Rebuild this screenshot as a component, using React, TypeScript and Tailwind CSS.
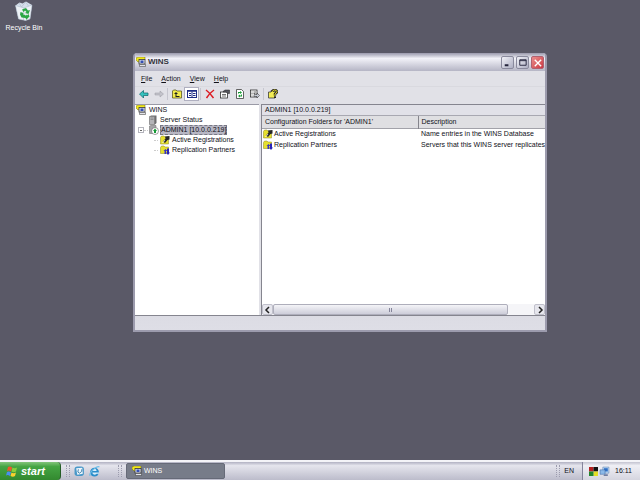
import type { ReactNode } from "react";
import clsx from "clsx";

function WinsIcon() {
  return (
    <svg viewBox="0 0 20 20" className="h-[10px] w-[10px] shrink-0" aria-hidden="true">
      <path d="M0 2L4 0h14v5H8v5H4L0 6z" fill="#f2e91c" stroke="#6b6614" />
      <rect x="6" y="5" width="12" height="9" fill="#dfe2ec" stroke="#333" strokeWidth="1.5" />
      <rect x="9" y="7" width="6" height="5" fill="#3550b4" />
      <path d="M7 15h12v4H7z" fill="#e3e4ea" stroke="#333" />
    </svg>
  );
}

function ServerIcon() {
  return (
    <svg viewBox="0 0 20 20" className="h-[10px] w-[10px] shrink-0" aria-hidden="true">
      <path d="M3 3l3-2h11v15l-3 3H3z" fill="#6d6d70" />
      <path d="M3 3h10v16H3z" fill="#b4b4b8" stroke="#777" />
      <path d="M5 6h6M5 9h6" stroke="#666" />
    </svg>
  );
}

function ServerUpIcon() {
  return (
    <svg viewBox="0 0 20 20" className="h-[10px] w-[10px] shrink-0" aria-hidden="true">
      <path d="M1 2l3-1h10v16H1z" fill="#a5a5aa" stroke="#666" />
      <circle cx="12" cy="12" r="7" fill="#fff" stroke="#444" />
      <path d="M12 7l4 5h-2v4h-4v-4H8z" fill="#159a35" />
    </svg>
  );
}

function RegistrationsIcon() {
  return (
    <svg viewBox="0 0 20 20" className="h-[10px] w-[10px] shrink-0" aria-hidden="true">
      <path d="M1 5l2-3h5l2 2h7v14H1z" fill="#e6e02e" stroke="#8a8520" />
      <path d="M10 3l9-1v7l-4 1-5 6-4-3 5-6z" fill="#262626" />
      <path d="M5 16l5-6" stroke="#fff" strokeWidth="1.5" />
    </svg>
  );
}

function PartnersIcon() {
  return (
    <svg viewBox="0 0 20 20" className="h-[10px] w-[10px] shrink-0" aria-hidden="true">
      <path d="M1 5l2-3h5l2 2h7v13H1z" fill="#e6e02e" stroke="#8a8520" />
      <path d="M11 8l4 4h-3v6H9v-6H7z" fill="#3a36c0" />
      <path d="M16 20l-4-5h2V7h4v8h2z" fill="#2824b8" />
    </svg>
  );
}

function RecycleIcon() {
  return (
    <svg viewBox="0 0 40 40" className="h-[20px] w-[20px]" aria-hidden="true">
      <path d="M3 9l8-6 6 2 7-4 12 7-4 28-9 3-14-3z" fill="#d5dfeb" />
      <path d="M3 9l17 5 16-6-4 28-9 3-14-3z" fill="#edf2f6" stroke="#a5b2c3" />
      <path d="M20 14l-1 24M10 4l5 8 8-10 6 8" stroke="#b5c1d0" strokeWidth="1.5" fill="none" />
      <path d="M16 17l8-3 4 5 4-1-3 8-7-2 3-2-3-3-3 3zM13 22l6 2-1 3 5 1v6l-8-1-3-6zM29 26l2 5-5 5v2l-5-6 5-5v2z" fill="#2ba845" />
    </svg>
  );
}

function Flag() {
  return (
    <svg viewBox="0 0 24 22" className="h-[11px] w-[12px] shrink-0" aria-hidden="true">
      <path d="M4 2q4-2 8 1l-2 8q-4-3-8-1z" fill="#f0562b" />
      <path d="M13 3q4 3 9 0l-2 8q-4 3-9 0z" fill="#88cf3c" />
      <path d="M2 12q4-2 8 1l-2 7q-4-3-8-1z" fill="#4a8ef0" />
      <path d="M11 13q4 3 9 0l-2 7q-4 3-9 0z" fill="#fbd02f" />
    </svg>
  );
}

const toolbar: { label: string; art?: ReactNode; active?: boolean }[] = [
  {
    label: "Back",
    art: <path d="M1 10l8-7v5h9v5H9v5z" fill="#35c4c0" stroke="#116b70" strokeWidth="1.5" />,
  },
  {
    label: "Forward",
    art: <path d="M19 10l-7-6v4H2v4h10v4z" fill="#c3c3cb" stroke="#9a9aa3" />,
  },
  { label: "sep" },
  {
    label: "Up one level",
    art: (
      <>
        <path d="M1 4l2-2h5l2 2h9v14H1z" fill="#f3ed4c" stroke="#55521a" strokeWidth="1.5" />
        <path d="M8 6l4 4H9v4h6v2H7v-6H4z" fill="#1c1c1c" />
      </>
    ),
  },
  {
    label: "Show/Hide Console Tree",
    active: true,
    art: (
      <>
        <rect x="1" y="3" width="18" height="14" fill="#fff" stroke="#1d2c86" strokeWidth="2" />
        <path d="M1 4h18" stroke="#1d2c86" strokeWidth="3" />
        <path d="M10 5v12M4 9h4M4 13h4M12 9h5M12 13h5" stroke="#1d2c86" strokeWidth="2" />
      </>
    ),
  },
  { label: "sep" },
  {
    label: "Delete",
    art: <path d="M2 2q8 6 15 16M18 2Q9 8 3 18" stroke="#dc1c24" strokeWidth="3" fill="none" />,
  },
  {
    label: "Properties",
    art: (
      <>
        <rect x="1" y="6" width="14" height="12" fill="#fff" stroke="#222" strokeWidth="1.5" />
        <path d="M4 11h8M4 14h8" stroke="#444" strokeWidth="1.5" />
        <path d="M6 5l4-3h9v7h-3l-4-3H6z" fill="#56565e" stroke="#222" />
      </>
    ),
  },
  {
    label: "Refresh",
    art: (
      <>
        <path d="M3 1h10l4 4v14H3z" fill="#fff" stroke="#333" strokeWidth="1.5" />
        <path d="M6 9V6h4V4l4 3-4 3V8H8v1zM14 11v4h-4v2l-4-3 4-3v2h2v-2z" fill="#179a35" />
      </>
    ),
  },
  {
    label: "Export List",
    art: (
      <>
        <rect x="1" y="2" width="13" height="14" fill="#fff" stroke="#222" strokeWidth="1.5" />
        <path d="M3 6h2M7 6h5M3 9h2M7 9h4M3 12h2" stroke="#333" strokeWidth="1.5" />
        <path d="M8 11h6V8l5 5-5 5v-3H8z" fill="#c8ccd6" stroke="#222" />
      </>
    ),
  },
  { label: "sep" },
  {
    label: "Help",
    art: (
      <>
        <path d="M1 6h5V3h8v15H1z" fill="#f2ec55" stroke="#333" strokeWidth="1.5" />
        <path d="M9 6q0-4 4-4t5 3q0 3-4 5v3" fill="none" stroke="#222" strokeWidth="5" />
        <path d="M9 6q0-4 4-4t5 3q0 3-4 5v3" fill="none" stroke="#f0e325" strokeWidth="2" />
        <path d="M12 15h4v3h-4z" fill="#222" />
      </>
    ),
  },
];

const rows = [
  { name: "Active Registrations", description: "Name entries in the WINS Database", icon: <RegistrationsIcon /> },
  { name: "Replication Partners", description: "Servers that this WINS server replicates", icon: <PartnersIcon /> },
];

function TitleBar() {
  const button = "grid h-[13px] w-[13px] place-items-center rounded-xs border";
  return (
    <header className="flex h-[18px] shrink-0 items-center bg-linear-to-b from-[#9a99ac] via-[#f3f3f9] via-30% to-[#b5b5c5] pr-px pl-px">
      <WinsIcon />
      <h1 className="ml-[2px] flex-1 text-[8px] font-bold text-[#33333d]">WINS</h1>
      <div className="flex gap-[2px]">
        <button aria-label="Minimize" className={clsx(button, "border-[#8a8a9d] bg-linear-to-br from-[#f2f2f8] to-[#adaec2]")}>
          <svg viewBox="0 0 12 12" className="size-[11px]">
            <path d="M3 9h4" stroke="#24243c" strokeWidth="2" />
          </svg>
        </button>
        <button aria-label="Maximize" className={clsx(button, "border-[#8a8a9d] bg-linear-to-br from-[#f2f2f8] to-[#adaec2]")}>
          <svg viewBox="0 0 12 12" className="size-[11px]">
            <path d="M3 3h7v6H3zM3 4h7" fill="none" stroke="#24243c" />
          </svg>
        </button>
        <button aria-label="Close" className={clsx(button, "border-[#b06070] bg-linear-to-br from-[#ea8c8c] to-[#c93442]")}>
          <svg viewBox="0 0 12 12" className="size-[11px]">
            <path d="M3 3l7 7M10 3l-7 7" stroke="#fff" strokeWidth="1.5" />
          </svg>
        </button>
      </div>
    </header>
  );
}

function Toolbar() {
  return (
    <div role="toolbar" className="flex h-[18px] shrink-0 items-center border-t border-[#d9d9df] pb-[3px] pl-px">
      {toolbar.map((item, i) =>
        item.art ? (
          <button
            key={i}
            aria-label={item.label}
            className={clsx("grid h-[14px] w-[15px] place-items-center border", item.active ? "border-[#b0b0c0] bg-white" : "border-transparent")}
          >
            <svg viewBox="0 0 20 20" className="size-[10px]">
              {item.art}
            </svg>
          </button>
        ) : (
          <span key={i} className="mx-px h-[12px] w-px bg-[#c6c6cf]" />
        )
      )}
    </div>
  );
}

function Tree() {
  const row = "flex h-[10px] items-center";
  return (
    <nav className="w-[124px] shrink-0 overflow-hidden border-t border-[#9a9aa6] bg-white">
      <ul>
        <li className={clsx(row, "gap-[3px] pl-px")}>
          <WinsIcon />
          WINS
        </li>
        <li className={clsx(row, "gap-[2px] pl-[13px]")}>
          <ServerIcon />
          Server Status
        </li>
        <li className={clsx(row, "pl-[3px]")}>
          <button aria-label="Collapse" className="grid size-[6px] place-items-center border border-[#b4b4bc]">
            <span className="h-px w-[2px] bg-[#666]" />
          </button>
          <span className="mr-px w-[4px] border-t border-dotted border-[#ccc]" />
          <ServerUpIcon />
          <span className="ml-px h-[10px] border border-dashed border-[#777784] bg-[#b7b6c3] leading-[8px]">ADMIN1 [10.0.0.219]</span>
        </li>
        <li className={clsx(row, "gap-[2px] pl-[19px]")}>
          <span className="w-[4px] border-t border-dotted border-[#ccc]" />
          <RegistrationsIcon />
          Active Registrations
        </li>
        <li className={clsx(row, "gap-[2px] pl-[19px]")}>
          <span className="w-[4px] border-t border-dotted border-[#ccc]" />
          <PartnersIcon />
          Replication Partners
        </li>
      </ul>
    </nav>
  );
}

function ScrollBar() {
  const arrow = "grid w-[11px] place-items-center rounded-xs border border-[#c0c0cb] bg-[#e6e6ed]";
  return (
    <div className="flex h-[11px] shrink-0 bg-[#f5f5f8]">
      <button aria-label="Scroll left" className={arrow}>
        <svg viewBox="0 0 8 8" className="size-[8px]">
          <path d="M5 1L2 4l3 3" fill="none" stroke="#222" strokeWidth="1.5" />
        </svg>
      </button>
      <div className="flex flex-1">
        <div className="grid w-[90%] place-items-center rounded-xs border border-[#aeaebb] bg-linear-to-b from-[#f4f4f8] to-[#cdcdd9]">
          <span className="h-[4px] w-[3px] border-x border-[#85859a]" />
        </div>
      </div>
      <button aria-label="Scroll right" className={arrow}>
        <svg viewBox="0 0 8 8" className="size-[8px]">
          <path d="M3 1l3 3-3 3" fill="none" stroke="#222" strokeWidth="1.5" />
        </svg>
      </button>
    </div>
  );
}

function Details() {
  return (
    <section className="flex min-w-0 flex-1 flex-col overflow-hidden border-t border-l border-[#85858f] bg-white">
      <h2 className="h-[11px] shrink-0 border-b border-[#a8a8b1] bg-[#e1e1e8] pl-[3px] leading-[10px]">ADMIN1 [10.0.0.219]</h2>
      <div className="min-h-0 flex-1 overflow-hidden">
        <table className="w-full table-fixed border-collapse text-left whitespace-nowrap">
          <thead>
            <tr className="h-[12px] border-b border-[#a2a2a9] bg-[#dfdfe2]">
              <th className="w-[156px] border-r border-[#85858c] p-0 pl-[3px] font-normal">Configuration Folders for 'ADMIN1'</th>
              <th className="p-0 pl-[3px] font-normal">Description</th>
            </tr>
          </thead>
          <tbody>
            {rows.map((row) => (
              <tr key={row.name} className="h-[11px]">
                <td className="p-0 pl-px">
                  <span className="flex items-center gap-px">
                    {row.icon}
                    {row.name}
                  </span>
                </td>
                <td className="p-0 pl-[3px]">{row.description}</td>
              </tr>
            ))}
          </tbody>
        </table>
      </div>
      <ScrollBar />
    </section>
  );
}

function Grip() {
  return <span className="h-[12px] w-[4px] border-x border-dotted border-[#9c9cae]" />;
}

function Taskbar() {
  return (
    <footer className="flex h-[20px] items-stretch border-t-2 border-[#f4f4f8] bg-linear-to-b from-[#b1b1c2] via-[#e5e5ed] via-20% to-[#bcbccb]">
      <button className="flex w-[61px] items-center gap-[3px] rounded-r-sm border-r border-[#245c25] bg-linear-to-b from-[#82c47b] via-[#45a544] via-25% to-[#33892f] pl-[6px] text-[11px] font-bold text-white italic">
        <Flag />
        start
      </button>
      <div className="flex flex-1 items-center pl-[5px]">
        <Grip />
        <button aria-label="Show Desktop" className="ml-[4px]">
          <svg viewBox="0 0 20 20" className="size-[11px]">
            <rect x="1" y="1" width="17" height="17" rx="5" fill="#4a98c8" />
            <path d="M4 4l11-1 1 11-10 2z" fill="#edf5fb" />
            <path d="M8 6l-1 5 3 2 4-3V6" stroke="#2871a0" strokeWidth="1.5" fill="none" />
          </svg>
        </button>
        <button aria-label="Internet Explorer" className="ml-[4px]">
          <svg viewBox="0 0 20 20" className="size-[11px]">
            <circle cx="10" cy="11" r="8" fill="#2b8dca" />
            <path d="M6 9q1-4 4-4t4 4zM6 12h12v2h-4q-2 2-4 2-4-1-4-4z" fill="#d9eefa" />
            <path d="M2 18Q0 13 8 6t11-4" fill="none" stroke="#6cbce6" strokeWidth="2" />
          </svg>
        </button>
        <span className="w-[18px]" />
        <Grip />
        <button className="ml-[4px] flex h-[16px] w-[99px] items-center gap-[2px] rounded-xs border border-[#666a78] bg-[#777c89] pl-[5px] text-white">
          <WinsIcon />
          WINS
        </button>
      </div>
      <div className="flex items-center">
        <Grip />
        <button className="mr-[8px] ml-[4px]">EN</button>
      </div>
      <div className="flex w-[58px] items-center gap-px border-l border-[#85859c] bg-linear-to-b from-[#c3c3d0] via-[#efeff5] via-20% to-[#d5d5df] pl-[6px]">
        <svg viewBox="0 0 18 18" className="size-[9px]" aria-hidden="true">
          <path d="M0 0h9v9H0z" fill="#b52020" />
          <path d="M9 0h9v9H9z" fill="#111" />
          <path d="M9 9h9v9H9z" fill="#e4dd25" />
          <path d="M0 9h9v9H0z" fill="#20852b" />
        </svg>
        <svg viewBox="0 0 20 20" className="size-[11px]" aria-hidden="true">
          <path d="M7 2h11v11H7z" fill="#bfdcf6" stroke="#587cae" />
          <path d="M9 4h7v6H9z" fill="#2f6fc6" />
          <path d="M2 7h9v8H2z" fill="#8cb9e8" stroke="#3c68a5" />
          <path d="M10 15h6v3H8z" fill="#707ea2" />
        </svg>
        <time className="ml-[4px]">16:11</time>
      </div>
    </footer>
  );
}

export default function App() {
  return (
    <div className="flex min-h-screen flex-col overflow-hidden bg-[#5a5967] font-['Liberation_Sans',sans-serif] text-[7px] leading-[10px] text-[#111118]">
      <main className="relative flex-1">
        <button className="flex w-[48px] flex-col items-center gap-[2px] pt-px text-white">
          <RecycleIcon />
          Recycle Bin
        </button>
        <article className="absolute top-[53px] left-[133px] flex h-[279px] w-[414px] flex-col overflow-hidden rounded-t-[4px] border-2 border-t-0 border-[#9c9bad] bg-[#e1e1e7]">
          <TitleBar />
          <nav className="flex h-[15px] shrink-0 items-center gap-[9px] pl-[6px]">
            {["File", "Action", "View", "Help"].map((name) => (
              <button key={name}>
                <span className="underline">{name[0]}</span>
                {name.slice(1)}
              </button>
            ))}
          </nav>
          <Toolbar />
          <div className="flex min-h-0 flex-1 gap-[2px]">
            <Tree />
            <Details />
          </div>
          <div role="status" className="h-[15px] shrink-0 border-t border-[#85858f] bg-linear-to-b from-[#dcdce4] to-[#dedee6]" />
        </article>
      </main>
      <Taskbar />
    </div>
  );
}
